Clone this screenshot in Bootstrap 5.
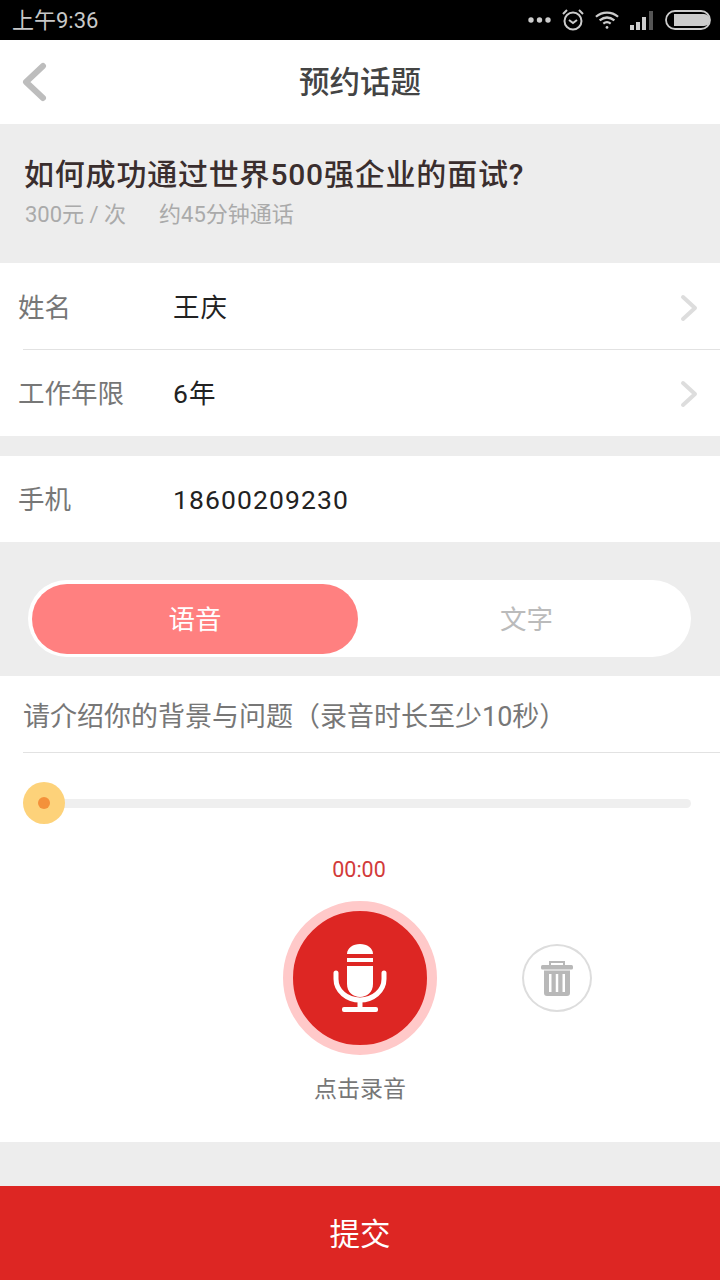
<!DOCTYPE html>
<html lang="zh-CN">
<head>
  <meta charset="UTF-8" />
  <meta name="viewport" content="width=device-width, initial-scale=1" />
  <title>预约话题</title>
  <link href="https://cdn.jsdelivr.net/npm/bootstrap@5.3.2/dist/css/bootstrap.min.css" rel="stylesheet" />
  <style>
    html, body { height: 100%; }
    body {
      width: 720px;
      height: 1280px;
      overflow: hidden;
      background-color: #ededed;
      font-family: Roboto, "Noto Sans CJK SC", sans-serif;
      color: #222;
    }
    .status-bar { height: 40px; background: #000; color: #c8c8c8; font-size: 22px; padding: 0 9px 0 12px; }
    .status-icons { gap: 10px; }
    .top-nav { height: 84px; background: #fff; position: relative; }
    .top-nav h1 { font-size: 30.5px; font-weight: 500; color: #444; margin: 2px 0 0; }
    .back-icon { position: absolute; left: 21px; top: 22px; }
    .topic-box { height: 139px; padding: 33px 24px 0; }
    .topic-title { font-size: 30px; letter-spacing: .8px; line-height: 36px; color: #3a2e2e; font-weight: 500; }
    .topic-meta { font-size: 22px; line-height: 30px; color: #aaa; gap: 33px; margin-top: 7px; padding-left: 1px; }
    .form-row { height: 87px; background: #fff; font-size: 26.5px; padding-top: 2px; }
    .form-row.short { height: 86px; }
    .row-label { width: 173px; padding-left: 18px; color: #777; }
    .row-value { color: #222; letter-spacing: 1.1px; }
    .row-chevron { margin-right: 22px; }
    .row-divider { position: absolute; left: 23px; right: 0; bottom: 0; height: 1px; background: #e2e2e2; }
    .gap-band { height: 20px; }
    .toggle-band { height: 134px; padding: 38px 29px 0 28px; }
    .toggle-pill { height: 77px; background: #fff; border-radius: 39px; padding: 4px; font-size: 26.5px; }
    .toggle-on { width: 326px; height: 70px; background: #ff8080; color: #fff; border-radius: 35px; padding-top: 2px; }
    .toggle-off { flex: 1; color: #bbb; padding: 2px 0 0 8px; }
    .record-panel { height: 466px; background: #fff; }
    .hint-row { height: 77px; margin-left: 23px; border-bottom: 1px solid #e2e2e2; font-size: 27px; color: #777; padding-top: 6px; }
    .slider-wrap { height: 42px; margin: 29px 29px 0 23px; position: relative; }
    .slider-track { height: 9px; background: #efefef; border-radius: 5px; margin-left: 21px; }
    .slider-thumb { position: absolute; left: 0; top: 0; width: 42px; height: 42px; border-radius: 50%; background: #fdd27a; }
    .slider-dot { width: 12px; height: 12px; border-radius: 50%; background: #f4913a; }
    .timer { font-size: 21.5px; line-height: 28px; color: #d23a3a; text-align: center; margin: 32px 2px 0 0; }
    .mic-row { position: relative; height: 154px; margin-top: 17px; }
    .mic-btn { width: 154px; height: 154px; border-radius: 50%; background: #dd2623; border: 10px solid #ffc9c9; }
    .trash-btn { position: absolute; left: 522px; top: 43px; width: 70px; height: 68px; border: 2px solid #ddd; border-radius: 50%; }
    .mic-label { font-size: 23px; line-height: 30px; color: #777; text-align: center; margin-top: 20px; }
    .bottom-band { height: 44px; }
    .submit-btn { height: 94px; width: 100%; background: #dd2623; color: #fff; border: 0; border-radius: 0; font-size: 30.5px; padding: 3px 0 0; }
    .submit-btn:hover { background: #dd2623; color: #fff; }
  </style>
</head>
<body>
  <div class="status-bar d-flex align-items-center justify-content-between">
    <span>上午9:36</span>
    <div class="status-icons d-flex align-items-center">
      <svg width="23" height="6" viewBox="0 0 23 6" fill="#ccc"><circle cx="3" cy="3" r="2.700"/><circle cx="11.500" cy="3" r="2.700"/><circle cx="20" cy="3" r="2.700"/></svg>
      <svg width="24" height="24" viewBox="0 0 24 24" fill="none" stroke="#ccc" stroke-width="2"><circle cx="12" cy="13" r="8.500"/><path d="M8 12l4 3 4-3M2 6l4-4M22 6l-4-4"/></svg>
      <svg width="24" height="20" viewBox="0 0 26 20" fill="none" stroke="#ccc" stroke-width="2.400"><path d="M1 6.500c7-6 17-6 24 0M5 10.500c5-4 11-4 16 0M9 14c2.500-2 5.500-2 8 0"/><circle cx="13" cy="18" r="1.500" fill="#ccc" stroke="none"/></svg>
      <svg width="26" height="22" viewBox="0 0 26 22"><path fill="#ccc" d="M1 16h4v5H1zM7 13h4v8H7zM13 8h4v13h-4z"/><path fill="#555" d="M20 2h4v19h-4z"/></svg>
      <svg width="46" height="20" viewBox="0 0 46 20"><rect x="1" y="1" width="44" height="18" rx="9" fill="none" stroke="#ccc" stroke-width="1.800"/><path fill="#ccc" d="M9 4h30a6 6 0 0 1 0 12H9z"/></svg>
    </div>
  </div>

  <div class="top-nav d-flex align-items-center justify-content-center">
    <svg class="back-icon" width="26" height="40" viewBox="0 0 26 40" fill="none" stroke="#bdbdbd" stroke-width="6" stroke-linecap="round" stroke-linejoin="round"><path d="M22 4L5 20l17 16"/></svg>
    <h1>预约话题</h1>
  </div>

  <div class="topic-box">
    <div class="topic-title">如何成功通过世界500强企业的面试?</div>
    <div class="topic-meta d-flex"><span>300元 / 次</span><span>约45分钟通话</span></div>
  </div>

  <div class="form-row d-flex align-items-center position-relative">
    <div class="row-label">姓名</div>
    <div class="row-value flex-grow-1">王庆</div>
    <svg class="row-chevron" width="18" height="28" viewBox="0 0 18 28" fill="none" stroke="#ddd" stroke-width="4" stroke-linecap="round" stroke-linejoin="round"><path d="M3 3l12 11L3 25"/></svg>
    <div class="row-divider"></div>
  </div>
  <div class="form-row short d-flex align-items-center">
    <div class="row-label">工作年限</div>
    <div class="row-value flex-grow-1">6年</div>
    <svg class="row-chevron" width="18" height="28" viewBox="0 0 18 28" fill="none" stroke="#ddd" stroke-width="4" stroke-linecap="round" stroke-linejoin="round"><path d="M3 3l12 11L3 25"/></svg>
  </div>
  <div class="gap-band"></div>
  <div class="form-row short d-flex align-items-center">
    <div class="row-label">手机</div>
    <div class="row-value">18600209230</div>
  </div>

  <div class="toggle-band">
    <div class="toggle-pill d-flex align-items-center">
      <div class="toggle-on d-flex align-items-center justify-content-center">语音</div>
      <div class="toggle-off text-center">文字</div>
    </div>
  </div>

  <div class="record-panel">
    <div class="hint-row d-flex align-items-center">请介绍你的背景与问题（录音时长至少10秒）</div>
    <div class="slider-wrap d-flex flex-column justify-content-center">
      <div class="slider-track"></div>
      <div class="slider-thumb d-flex align-items-center justify-content-center"><div class="slider-dot"></div></div>
    </div>
    <div class="timer">00:00</div>
    <div class="mic-row d-flex justify-content-center">
      <div class="mic-btn d-flex align-items-center justify-content-center">
        <svg width="54" height="68" viewBox="0 0 54 68" fill="#fff">
          <path d="M14 10C14 4 20 0 27 0s13 4 13 10z"/>
          <path d="M14 14h26v4H14z"/>
          <path d="M14 22h26v18c0 8-6 13-13 13s-13-5-13-13z"/>
          <path d="M3 29v6c0 12 11 21 24 21s24-9 24-21v-6" fill="none" stroke="#fff" stroke-width="5" stroke-linecap="round"/>
          <path d="M24.500 55h5v9h-5z"/>
          <rect x="9" y="63" width="36" height="5" rx="2"/>
        </svg>
      </div>
      <div class="trash-btn d-flex align-items-center justify-content-center">
        <svg width="32" height="36" viewBox="0 0 32 36" fill="#b8b8b8">
          <path d="M8 6V1h16v5h-2V3H10v3z"/>
          <rect x="0" y="5" width="32" height="4.500" rx="1.500"/>
          <path fill-rule="evenodd" d="M3 10.500h26V33a3 3 0 0 1-3 3H6a3 3 0 0 1-3-3zM8 14v18h2.500V14zM14.750 14v18h2.500V14zM21.500 14v18H24V14z"/>
        </svg>
      </div>
    </div>
    <div class="mic-label">点击录音</div>
  </div>

  <div class="bottom-band"></div>
  <button type="button" class="btn submit-btn d-block">提交</button>
</body>
</html>
